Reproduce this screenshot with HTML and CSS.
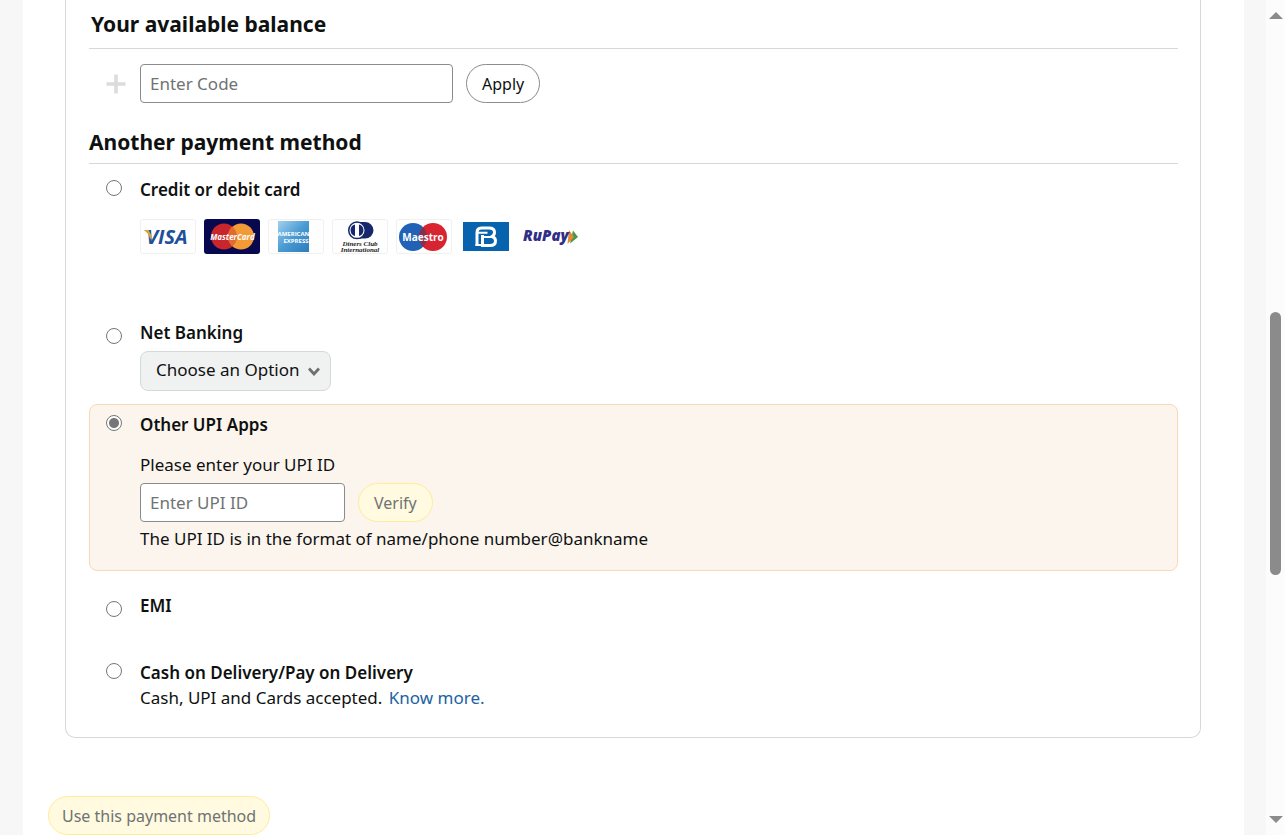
FILE: index.html
```html
<!DOCTYPE html>
<html lang="en">
<head>
<meta charset="utf-8">
<title>Select a payment method</title>
<link rel="stylesheet" href="styles.css">
</head>
<body>
<div class="viewport">
  <main class="sheet">
    <form class="payment">
      <section class="panel">
        <h2 class="heading heading-balance">Your available balance</h2>
        <div class="code-row">
          <svg class="plus" viewBox="0 0 20 20" aria-hidden="true"><path d="M10 0.5v19M0.5 10h19" stroke="#dcdcdc" stroke-width="3.6"/></svg>
          <input class="field field-code" type="text" placeholder="Enter Code" aria-label="Enter Code">
          <button class="pill" type="button">Apply</button>
        </div>
        <h2 class="heading heading-methods">Another payment method</h2>

        <div class="option option-card">
          <input class="radio" type="radio" name="method" id="card">
          <div class="option-body">
            <label class="option-label" for="card">Credit or debit card</label>
            <div class="cards">
              <svg class="card" viewBox="0 0 56 35" role="img" aria-label="Visa">
                <rect x=".5" y=".5" width="55" height="34" rx="2" fill="#fefefe" stroke="#f0f0ee"/>
                <text x="27" y="25" text-anchor="middle" class="logo logo-visa">VISA</text>
                <path d="M3.500 11h5l3.500 6.500-1.500 3C9 16 7 13 3.500 11Z" fill="#d9a441"/>
              </svg>
              <svg class="card" viewBox="0 0 56 35" role="img" aria-label="MasterCard">
                <rect width="56" height="35" rx="3" fill="#08084f"/>
                <circle cx="20" cy="17.500" r="13" fill="#c9252d"/><circle cx="37" cy="17.500" r="13" fill="#f29a35"/>
                <path d="M28.500 7.700a13 13 0 0 1 0 19.600a13 13 0 0 1 0-19.600Z" fill="#e26a32"/>
                <text x="28.500" y="21" text-anchor="middle" class="logo logo-master">MasterCard</text>
              </svg>
              <svg class="card" viewBox="0 0 56 35" role="img" aria-label="American Express">
                <defs><linearGradient id="amex" x1="0" y1="0" x2="1" y2="1"><stop stop-color="#a3d0ee"/><stop offset=".5" stop-color="#4a9bd4"/><stop offset="1" stop-color="#2c7cba"/></linearGradient></defs>
                <rect x=".5" y=".5" width="55" height="34" rx="2" fill="#fefefe" stroke="#f0f0ee"/>
                <rect x="10" y="2" width="31" height="31" fill="url(#amex)"/>
                <text x="25.500" y="17" text-anchor="middle" class="logo logo-amex">AMERICAN</text>
                <text x="28" y="24" text-anchor="middle" class="logo logo-amex">EXPRESS</text>
              </svg>
              <svg class="card" viewBox="0 0 56 35" role="img" aria-label="Diners Club International">
                <rect x=".5" y=".5" width="55" height="34" rx="2" fill="#fefefe" stroke="#f0f0ee"/>
                <path d="M24 3h9a8.500 8.300 0 0 1 0 16.600h-9Z" fill="#17276b"/>
                <circle cx="25" cy="11.300" r="8.300" fill="#fff" stroke="#17276b" stroke-width="1.500"/>
                <path d="M23 5.500a6 6 0 0 0 0 11.600ZM27 5.500a6 6 0 0 1 0 11.600Z" fill="#17276b"/>
                <text x="28" y="27" text-anchor="middle" class="logo logo-diners">Diners Club</text>
                <text x="28" y="33" text-anchor="middle" class="logo logo-diners">International</text>
              </svg>
              <svg class="card" viewBox="0 0 56 35" role="img" aria-label="Maestro">
                <rect x=".5" y=".5" width="55" height="34" rx="2" fill="#fefefe" stroke="#f0f0ee"/>
                <circle cx="17" cy="18" r="14" fill="#2262b6"/><circle cx="37" cy="18" r="14" fill="#d82331"/>
                <path d="M27 8.200a14 14 0 0 1 0 19.600a14 14 0 0 1 0-19.600Z" fill="#84304f"/>
                <text x="27" y="21.500" text-anchor="middle" class="logo logo-maestro">Maestro</text>
              </svg>
              <svg class="card" viewBox="0 0 56 35" role="img" aria-label="Bajaj Finserv">
                <rect x="3" y="3" width="46" height="29" fill="#0763ad"/>
                <path d="M17 27V13.500Q17 9 21.500 9H29Q34.500 9 34.500 13.200 34.500 16 32 17.500 35.500 18.500 35.500 22 35.500 26.500 30 26.500H22.500V16" fill="none" stroke="#fff" stroke-width="3"/>
                <path d="M17 13.800h10.500M21.500 18h10.500M15.500 26h5.500" fill="none" stroke="#fff" stroke-width="2"/>
              </svg>
              <svg class="card" viewBox="0 0 56 35" role="img" aria-label="RuPay">
                <path d="M49 11.500l5 6.500-8 6.500Z" fill="#4a9747"/><path d="M45 11l5 7-6.500 7Z" fill="#e98734"/>
                <text x="-1" y="22" class="logo logo-rupay">RuPay</text>
              </svg>
            </div>
          </div>
        </div>

        <div class="option option-low option-bank">
          <input class="radio" type="radio" name="method" id="bank">
          <div class="option-body">
            <label class="option-label" for="bank">Net Banking</label>
            <div class="select-wrap">
              <select class="select" aria-label="Choose a bank"><option>Choose an Option</option></select>
              <svg class="chevron" viewBox="0 0 12 9" aria-hidden="true"><path d="M1 1.500l5 5.500 5-5.500" fill="none" stroke="#6c7070" stroke-width="2.800"/></svg>
            </div>
          </div>
        </div>

        <div class="option option-active">
          <input class="radio" type="radio" name="method" id="upi" checked>
          <div class="option-body">
            <label class="option-label" for="upi">Other UPI Apps</label>
            <label class="upi-prompt" for="upi-id">Please enter your UPI ID</label>
            <div class="upi-row">
              <input class="field field-upi" type="text" id="upi-id" placeholder="Enter UPI ID">
              <button class="pill pill-yellow" type="button">Verify</button>
            </div>
            <p class="note">The UPI ID is in the format of name/phone number@bankname</p>
          </div>
        </div>

        <div class="option option-low option-emi">
          <input class="radio" type="radio" name="method" id="emi">
          <label class="option-label" for="emi">EMI</label>
        </div>

        <div class="option option-cash">
          <input class="radio" type="radio" name="method" id="cash">
          <div class="option-body">
            <label class="option-label" for="cash">Cash on Delivery/Pay on Delivery</label>
            <p class="note note-cash">Cash, UPI and Cards accepted. <a class="link" href="#">Know more.</a></p>
          </div>
        </div>
      </section>
      <button class="pill pill-yellow submit" type="submit">Use this payment method</button>
    </form>
  </main>
  <div class="scrollbar" aria-hidden="true">
    <svg class="arrow" viewBox="0 0 14 7"><path d="M7 0l7 7H0Z" fill="#8b8b8b"/></svg>
    <div class="track"><div class="thumb"></div></div>
    <svg class="arrow" viewBox="0 0 14 7"><path d="M0 0h14L7 7Z" fill="#8b8b8b"/></svg>
  </div>
</div>
</body>
</html>
```
FILE: styles.css
```css
* { box-sizing: border-box; }

body {
  margin: 0;
  background: #f7f7f7;
  color: #0f1111;
  font: 17px/24px "Noto Sans", "Open Sans", sans-serif;
}

.viewport {
  display: flex;
  height: 100vh;
  overflow: hidden;
}

.sheet {
  flex: 1;
  margin: 0 22px 0 23px;
  padding: 0 43px 0 25px;
  background: #fff;
}

.panel {
  margin-left: 17px;
  padding: 0 22px 27px 23px;
  border: 1px solid #d5d9d9;
  border-top: 0;
  border-radius: 0 0 10px 10px;
}

.heading {
  margin: 0;
  border-bottom: 1px solid #d5d9d9;
  font-size: 21px;
  line-height: 28px;
  font-weight: 700;
}
.heading-balance { padding: 10px 2px; }
.heading-methods { padding: 25px 0 7px; }

.code-row,
.upi-row {
  display: flex;
  align-items: center;
}
.code-row { margin-top: 15px; padding-left: 17px; }
.plus { width: 20px; height: 20px; margin-right: 14px; }

.field {
  height: 39px;
  padding: 0 9px;
  border: 1px solid #888c8c;
  border-radius: 4px;
  background: #fff;
  color: inherit;
  font: inherit;
}
.field::placeholder { color: #6f7373; opacity: 1; }
.field-code { width: 313px; }
.field-upi { width: 205px; }

.pill {
  height: 39px;
  margin-left: 13px;
  padding: 0 15px;
  border: 1px solid #888c8c;
  border-radius: 20px;
  background: #fff;
  color: #0f1111;
  font: inherit;
  font-size: 16px;
}
.pill-yellow {
  border-color: #ffec9a;
  background: #fffae0;
  color: #6f7373;
}
.submit { margin: 58px 0 0; padding: 0 13px; }

.option {
  display: flex;
  gap: 18px;
  padding-left: 17px;
}
.option-body { flex: 1; }
.option-label { display: block; font-weight: 600; }
.option-card { margin-top: 14px; }
.option-bank { margin-top: 67px; }
.option-emi { margin-top: 23px; }
.option-cash { margin-top: 43px; }
.option-active {
  margin-top: 13px;
  padding: 8px 16px 19px;
  border: 1px solid #fbd8b4;
  border-radius: 8px;
  background: #fcf5ee;
}

.radio {
  appearance: none;
  flex: none;
  width: 16px;
  height: 16px;
  margin: 2px 0 0;
  border: 1px solid #767676;
  border-radius: 50%;
  background: #fff;
}
.radio:checked {
  background: radial-gradient(circle, #767676 0 4.5px, #fff 5.5px);
}
.option-low .radio { margin-top: 7px; }

.cards { display: flex; gap: 8px; margin-top: 17px; }
.card { width: 56px; height: 35px; overflow: visible; }
.logo { font-family: "Open Sans", sans-serif; font-weight: 700; }
.logo-visa { font-size: 20px; font-style: italic; fill: #20509a; }
.logo-master { font-size: 8px; font-style: italic; fill: #fff; }
.logo-amex { font-size: 6px; fill: #fff; }
.logo-diners { font-family: "Liberation Serif", serif; font-size: 7px; font-style: italic; fill: #222; }
.logo-maestro { font-size: 10px; fill: #fff; }
.logo-rupay { font-size: 15px; font-style: italic; font-weight: 800; fill: #302e86; }

.select-wrap { display: grid; width: 191px; margin-top: 6px; align-items: center; }
.select {
  grid-area: 1 / 1;
  height: 40px;
  padding: 0 15px 2px;
  appearance: none;
  border: 1px solid #d5d9d9;
  border-radius: 8px;
  background: #f0f2f2;
  color: inherit;
  font: inherit;
}
.chevron {
  grid-area: 1 / 1;
  justify-self: end;
  width: 12px;
  height: 9px;
  margin-right: 11px;
  pointer-events: none;
}

.upi-prompt { display: block; margin-top: 16px; }
.upi-row { margin: 6px 0 5px; }
.note { margin: 0; }
.note-cash { margin-top: 1px; }
.link { margin-left: 2px; color: #2162a1; text-decoration: none; }

.scrollbar {
  display: flex;
  flex-direction: column;
  align-items: center;
  width: 19px;
  padding: 12px 0;
  background: #fcfcfc;
}
.arrow { width: 14px; height: 7px; }
.track { flex: 1; padding-top: 293px; }
.thumb { width: 11px; height: 263px; border-radius: 6px; background: #8b8b8b; }
```
